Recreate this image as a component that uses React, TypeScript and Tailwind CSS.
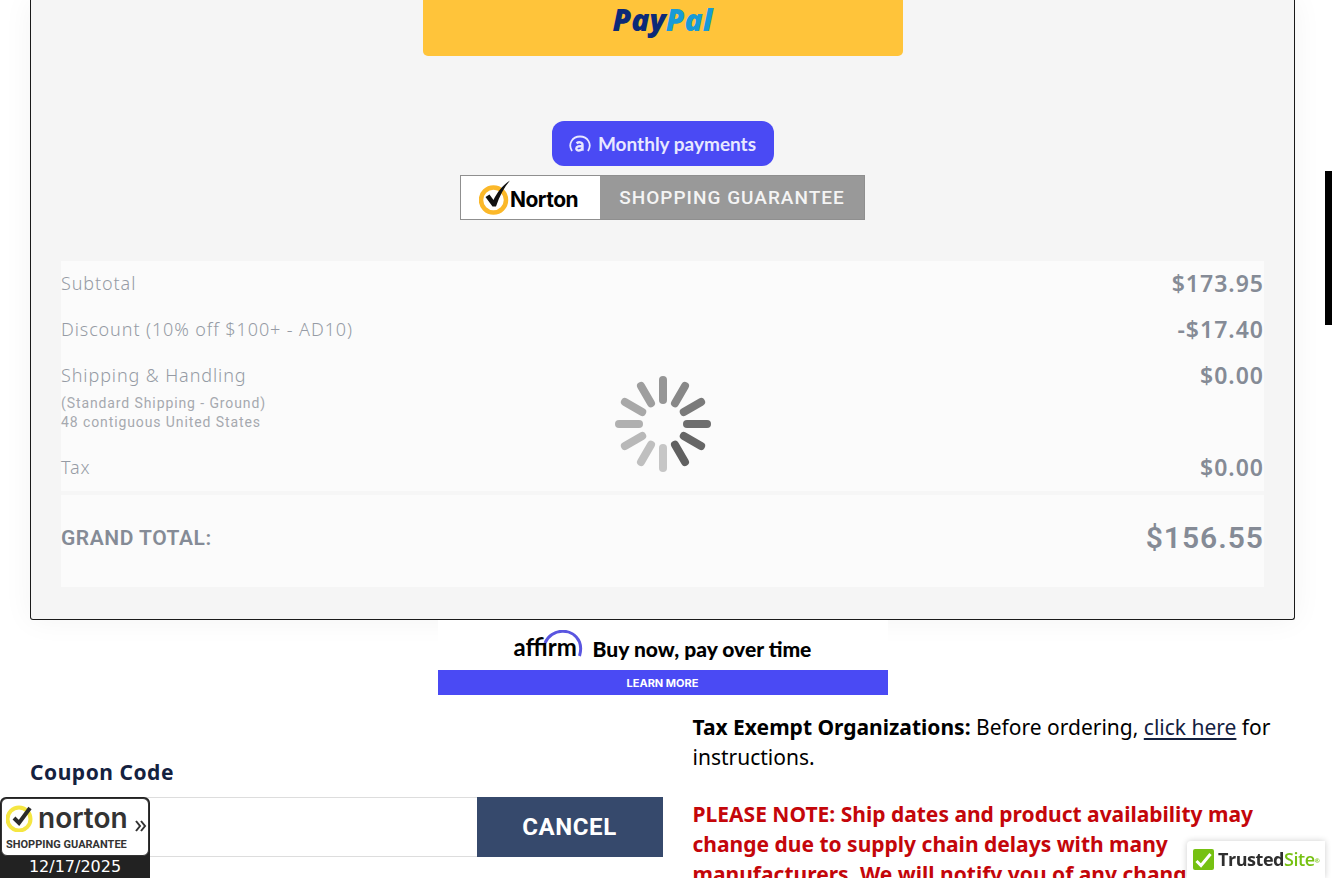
import React, { useState } from "react";

const rows = [
  { label: "Subtotal", amount: "$173.95" },
  { label: "Discount (10% off $100+ - AD10)", amount: "-$17.40" },
  { label: "Shipping & Handling", notes: ["(Standard Shipping - Ground)", "48 contiguous United States"], amount: "$0.00" },
  { label: "Tax", amount: "$0.00" },
];

// spokes go clockwise from 12 o'clock
const spokes = [
  "#969696", "#888888", "#7a7a7a", "#6e6e6e", "#666666", "#606060",
  "#c6c6c6", "#bfbfbf", "#b8b8b8", "#b0b0b0", "#a8a8a8", "#9e9e9e",
];

function Spinner() {
  return (
    <svg className="h-24 w-24" viewBox="0 0 96 96" role="img" aria-label="Loading">
      {spokes.map((color, i) => (
        <rect key={i} x="44" y="0" width="8" height="28" rx="4" fill={color} transform={`rotate(${i * 30} 48 48)`} />
      ))}
    </svg>
  );
}

function NortonGuarantee() {
  return (
    <div className="mt-[9px] flex h-[45px] w-[405px] border border-[#8f8f8f] bg-[#999999]">
      <div className="flex w-[139px] shrink-0 items-center bg-white pl-[18px]">
        <svg className="h-9 w-8 shrink-0" viewBox="0 0 32 36">
          <circle cx="14.5" cy="20" r="12.5" fill="none" stroke="#fbb829" strokeWidth="4.5" />
          <path d="M6.500 17l4-2.500 4 5.500C18 13 23 5.500 31 .5c-6 7-10.500 15.500-14 26h-3.500z" fill="#111" />
        </svg>
        <span className="-ml-px pt-1 font-['Inter',sans-serif] text-[21px] leading-6 font-bold tracking-tight text-black">Norton</span>
      </div>
      <span className="flex flex-1 items-center justify-center pt-px font-['Roboto',sans-serif] text-[19px] font-medium tracking-[1px] whitespace-nowrap text-[#f4f4f4]">
        SHOPPING GUARANTEE
      </span>
    </div>
  );
}

function OrderTotals() {
  return (
    <div className="relative mt-[41px] w-full bg-[#fbfbfb]">
      <table className="w-full border-collapse">
        <tbody>
          {rows.map((row) => (
            <tr key={row.label} className="align-top">
              <th scope="row" className="pt-2 pb-[10px] text-left text-lg leading-7 font-light tracking-wider text-[#969ba5]">
                {row.label}
                {row.notes && (
                  <div className="mt-[5px] pb-[3px] font-['Roboto',sans-serif] text-sm leading-[19px] font-normal text-[#a6a9af]">
                    {row.notes.map((note) => (
                      <div key={note}>{note}</div>
                    ))}
                  </div>
                )}
              </th>
              <td className="pt-2 pb-[10px] text-right text-[23px] leading-7 font-semibold tracking-[1px] text-[#858b96]">{row.amount}</td>
            </tr>
          ))}
        </tbody>
        <tfoot>
          <tr className="border-t-4 border-[#f6f6f6] font-['Roboto',sans-serif] text-[#858b96]">
            <th scope="row" className="pt-[23px] pb-[29px] text-left text-[21px] leading-10 font-semibold tracking-wide">GRAND TOTAL:</th>
            <td className="pt-[23px] pb-[29px] text-right text-[30px] leading-10 font-semibold tracking-[1px]">$156.55</td>
          </tr>
        </tfoot>
      </table>
      <div className="absolute inset-0 flex items-center justify-center">
        <Spinner />
      </div>
    </div>
  );
}

function AffirmBanner() {
  return (
    <a href="#affirm" className="relative mx-auto block w-[450px] bg-white">
      <div className="flex h-[50px] items-center justify-center gap-[10px] pb-px">
        <div className="relative flex h-[30px] w-[69px] items-end">
          <svg className="absolute inset-0 h-[30px] w-[69px]" viewBox="0 0 69 30">
            <path d="M31 13C37-2 59-3 65.500 12c1.500 4 1.500 9 0 14" fill="none" stroke="#5a56e0" strokeWidth="3" />
          </svg>
          <span className="relative font-['Lato',sans-serif] text-2xl leading-[26px] font-bold text-black">affirm</span>
        </div>
        <span className="pt-2 font-['Lato',sans-serif] text-[21px] leading-7 font-black text-black">Buy now, pay over time</span>
      </div>
      <div className="flex h-[25px] items-center justify-center bg-[#4a4af4] pt-[2px] font-['Inter',sans-serif] text-[11px] font-bold text-white">
        LEARN MORE
      </div>
    </a>
  );
}

function NortonSeal() {
  return (
    <button type="button" className="fixed bottom-0 left-0 w-[150px] rounded-t-md bg-[#222222] text-left">
      <div className="m-px mb-0 flex h-[58px] flex-col rounded-md border border-[#333333] bg-white pl-1">
        <div className="flex h-[37px] items-center">
          <svg className="h-7 w-7 shrink-0" viewBox="0 0 28 28">
            <circle cx="13" cy="15" r="11.500" fill="none" stroke="#f5e642" strokeWidth="4" />
            <path d="M8 14l5 5L24 4" fill="none" stroke="#2b2b2b" strokeWidth="4" />
          </svg>
          <span className="ml-1 font-['Inter',sans-serif] text-[28px] leading-8 font-semibold text-[#333333]">norton</span>
        </div>
        <span className="font-['Roboto',sans-serif] text-[11px] leading-[18px] font-bold whitespace-nowrap text-[#333333]">
          SHOPPING GUARANTEE
        </span>
      </div>
      <svg className="absolute top-[23px] right-[3px] h-3 w-3" viewBox="0 0 12 12" fill="none" stroke="#333333" strokeWidth="2">
        <path d="M1 1l4 5-4 5M6 1l4 5-4 5" />
      </svg>
      <div className="h-[22px] text-center font-['DejaVu_Sans',sans-serif] text-base leading-[22px] text-white">12/17/2025</div>
    </button>
  );
}

function TrustedSite() {
  return (
    <a href="#trustedsite" className="fixed right-[7px] bottom-0 flex h-[37px] w-[138px] items-center gap-1 rounded-tl bg-white pl-[6px] shadow-[0_0_6px_rgba(0,0,0,0.2)]">
      <svg className="h-[21px] w-[21px] shrink-0" viewBox="0 0 21 21">
        <rect width="21" height="21" rx="2" fill="#76c112" />
        <path d="M3.500 12l4.500 4.500L17.500 5" fill="none" stroke="#fff" strokeWidth="3" />
      </svg>
      <span className="pb-px font-['Open_Sans',sans-serif] text-lg leading-6 font-bold tracking-tight text-[#2f2f2f]">
        Trusted<span className="font-semibold text-[#76c112]">Site</span>
        <sup className="text-[6px] text-[#76c112]">®</sup>
      </span>
    </a>
  );
}

export default function CheckoutPage() {
  const [coupon, setCoupon] = useState("");

  return (
    <div className="flex h-screen overflow-hidden bg-white font-['Noto_Sans',sans-serif] text-black">
      <main className="min-w-0 flex-1">
        <section className="mx-[30px] flex flex-col items-center rounded-b-[3px] border border-t-0 border-[#1a1a1a] bg-[#f5f5f5] px-[30px] pb-8 shadow-[0_0_30px_rgba(0,0,0,0.05)]">
          <button type="button" className="flex h-14 w-[480px] items-start justify-center rounded-b-[5px] bg-[#ffc43a] font-['Open_Sans',sans-serif] text-[30px] leading-10 font-extrabold text-[#0c2a78] italic">
            Pay<span className="text-[#179bd7]">Pal</span>
          </button>
          <button type="button" className="mt-[65px] flex h-[45px] w-[222px] items-center justify-center gap-[7px] rounded-xl bg-[#4a4af4] text-[#e8e8ff]">
            <svg className="h-[18px] w-[22px]" viewBox="0 0 22 18" fill="none" stroke="currentColor">
              <path d="M3 16C-1.500 9 3.500 1.500 11 1.500S23.500 9 19 16" strokeWidth="1.800" />
              <path d="M7.500 8.300c2-1.500 6-1.500 6 1.500v6M13.500 11c-3 0-6.200.2-6.200 2.500 0 2.800 5 2.500 6.200-.2" strokeWidth="2.400" />
            </svg>
            <span className="font-['Lato',sans-serif] text-[19px] leading-6 font-bold">Monthly payments</span>
          </button>
          <NortonGuarantee />
          <OrderTotals />
        </section>

        <AffirmBanner />

        <div className="grid grid-cols-2 gap-[30px] pt-[17px] pl-[30px]">
          <form className="pt-[45px]" onSubmit={(e) => e.preventDefault()}>
            <label htmlFor="coupon" className="block text-[21px] leading-[30px] font-bold tracking-wide text-[#14213f]">Coupon Code</label>
            <div className="mt-[10px] flex">
              <input
                id="coupon"
                className="h-[60px] min-w-0 flex-1 border border-r-0 border-[#dddddd] bg-white px-4 text-lg outline-none"
                value={coupon}
                onChange={(e) => setCoupon(e.target.value)}
              />
              <button type="button" className="h-[60px] w-[186px] bg-[#36496c] font-['Roboto',sans-serif] text-2xl font-bold tracking-wide text-white" onClick={() => setCoupon("")}>
                CANCEL
              </button>
            </div>
          </form>
          <div className="text-[21px] leading-[30px]">
            <p>
              <strong>Tax Exempt Organizations:</strong> Before ordering, <a href="#tax-exempt" className="text-[#14213f] underline underline-offset-[3px]">click here</a> for instructions.
            </p>
            <p className="mt-[27px] font-bold text-[#c4060a]">
              PLEASE NOTE: Ship dates and product availability may change due to supply chain delays with many manufacturers. We will notify you of any changes.
            </p>
          </div>
        </div>
      </main>

      <div className="w-[7px] shrink-0 bg-white pt-[171px]">
        <div className="h-[154px] bg-black" />
      </div>

      <NortonSeal />
      <TrustedSite />
    </div>
  );
}
